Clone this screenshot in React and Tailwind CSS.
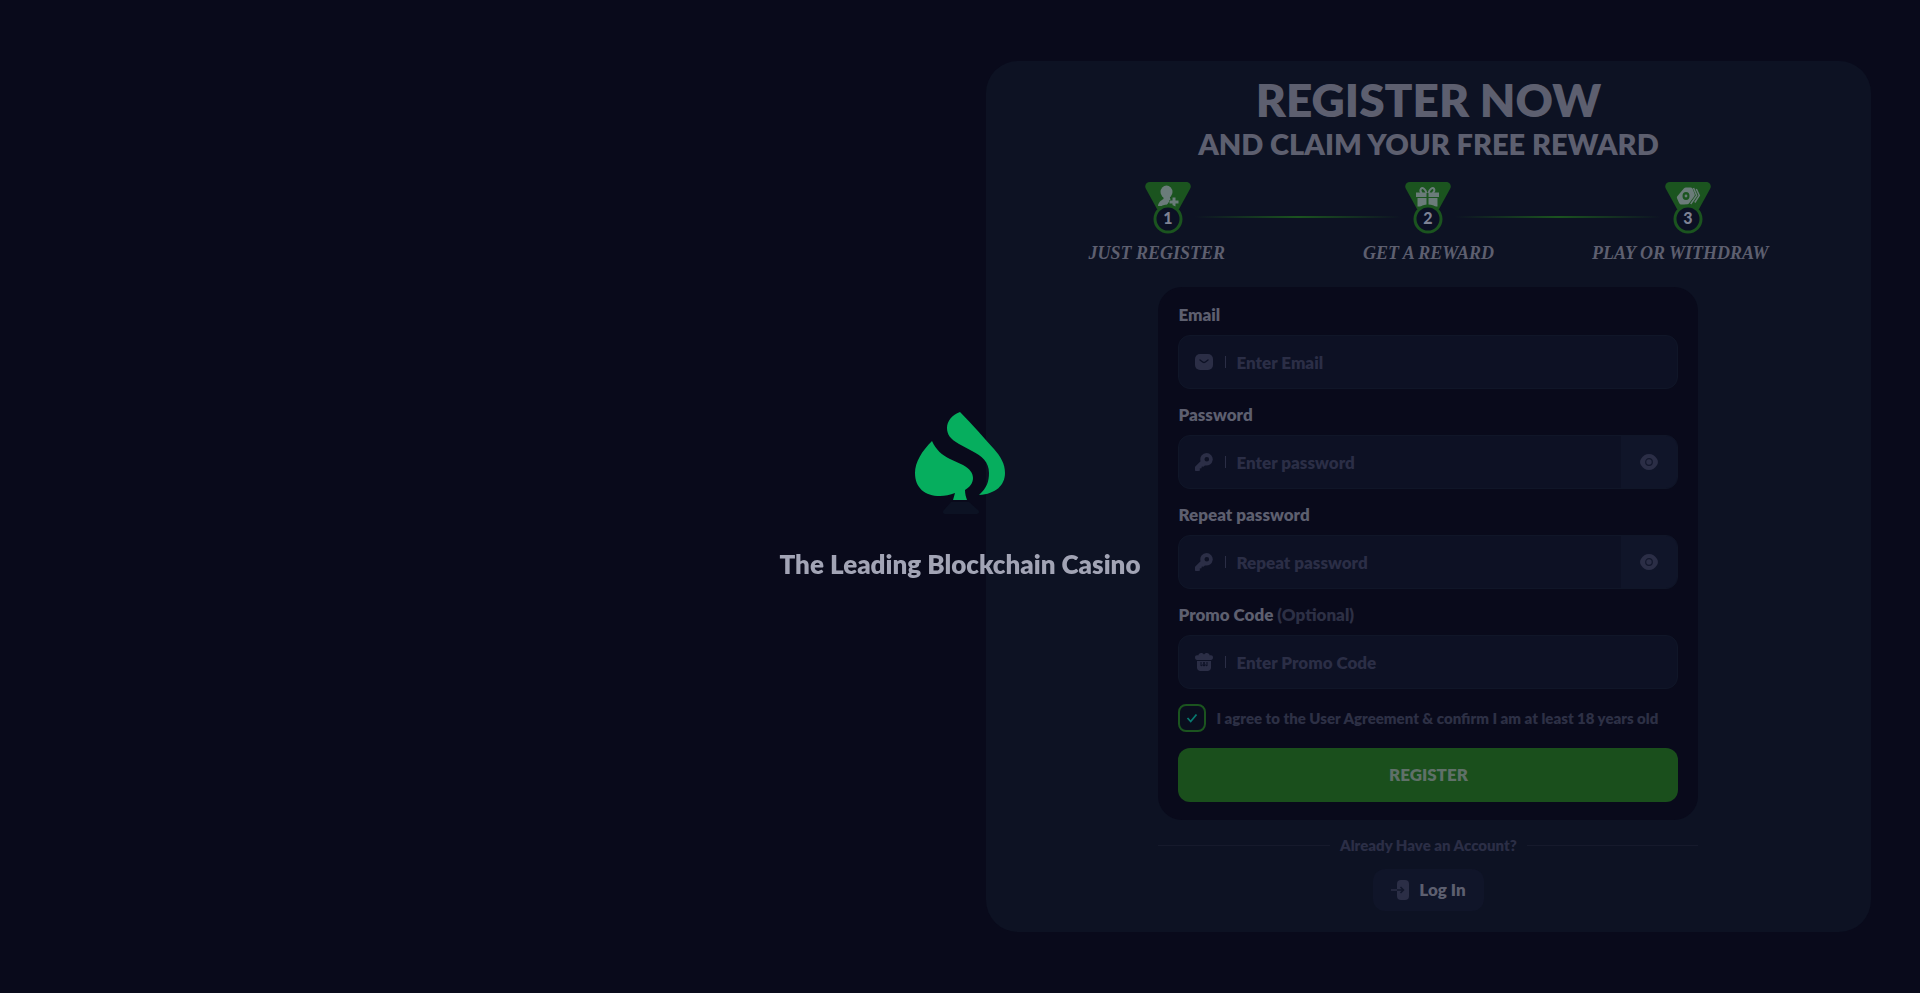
import { useState } from "react";

const steps = [
  { id: 1, label: "JUST REGISTER", icon: UserPlusIcon },
  { id: 2, label: "GET A REWARD", icon: GiftIcon },
  { id: 3, label: "PLAY OR WITHDRAW", icon: CashIcon },
];

function UserPlusIcon() {
  return (
    <g fill="#6b7c7a">
      <ellipse cx="21.500" cy="10" rx="6" ry="6.500" />
      <path d="M18.500 14h6l1 3.500-3 4.500-1.500 2H13c.500-4 3-5.500 5.500-7z" />
      <path d="M27.500 15.500h3v3h3v3h-3v3h-3v-3h-3v-3h3z" stroke="#1b541f" strokeWidth="1" paintOrder="stroke" />
    </g>
  );
}

function GiftIcon() {
  return (
    <g fill="#6b7c7a">
      <path d="M11 10.500h10.500V15H11zM23.500 10.500H34V15H23.500zM12.500 16h9v8.500h-9zM23.500 16h9v8.500h-9z" />
      <path d="M21.500 11c-1-4-4-6-5.500-4.300C15 8.200 15.500 10 17 11M23.500 11c1-4 4-6 5.500-4.300 1 1.500 0 3.300-1.500 4.300" fill="none" stroke="#6b7c7a" strokeWidth="2" />
    </g>
  );
}

function CashIcon() {
  return (
    <g>
      <path d="M21 5.500h4.500c1 0 1.800.500 2.200 1.500l2 5c.300.800.200 1.500-.300 2.200l-5.500 7.300c-.500.600-1.200 1-2 1h-5.600c-1 0-1.800-.600-2.200-1.500l-2-4.500c-.400-.800-.300-1.600.200-2.300l6.500-7.700c.600-.700 1.300-1 2.200-1z" fill="#6b7c7a" />
      <ellipse cx="21" cy="14" rx="3.500" ry="4" fill="#1b541f" />
      <circle cx="21" cy="14" r="1.400" fill="#6b7c7a" />
      <path d="M28.500 6l3.200 7.500-6 8.500M31.300 7l3 6.500-4.500 7" fill="none" stroke="#6b7c7a" strokeWidth="1.500" />
    </g>
  );
}

function StepBadge({ id, icon: Icon }) {
  return (
    <svg viewBox="0 0 46 52" className="w-[46px] h-[52px] shrink-0">
      <path d="M5 0h36c4 0 6 4 4 7L34 27H12L1 7C-1 4 1 0 5 0z" fill="#1b541f" />
      <Icon />
      <circle cx="23" cy="37" r="13" fill="#0b1024" stroke="#1b541f" strokeWidth="3" />
      <text x="23" y="42" textAnchor="middle" fontSize="16" fontWeight="900" fill="#7e8294" fontFamily="Lato, sans-serif">
        {id}
      </text>
    </svg>
  );
}

function MailIcon() {
  return (
    <svg viewBox="0 0 18 18" className="w-[18px] h-[18px]">
      <rect y="1" width="18" height="16" rx="5" fill="#2b2e46" />
      <path d="M5 7l3 2.200c.600.400 1.400.400 2 0L13 7" fill="none" stroke="#0d1125" strokeWidth="1.400" strokeLinecap="round" />
    </svg>
  );
}

function KeyIcon() {
  return (
    <svg viewBox="0 0 18 18" className="w-[18px] h-[18px]">
      <path fillRule="evenodd" d="M11.500 0a6.300 6.300 0 1 1-1.600 12.400L8.500 13.800 6.800 13.500 6.500 15.200 4.700 15.500 5 17.500 3.500 18H1c-.600 0-1-.400-1-1v-2.500c0-.500.200-1 .500-1.300L5.600 8.200A6.300 6.300 0 0 1 11.500 0zm.300 4a2.300 2.300 0 1 0 0 4.600 2.300 2.300 0 0 0 0-4.600z" fill="#2b2e46" />
    </svg>
  );
}

function PromoIcon() {
  return (
    <svg viewBox="0 0 18 18" className="w-[18px] h-[18px]">
      <path d="M2 8h14v6.500c0 2-1.500 3.500-3.500 3.500h-7C3.500 18 2 16.500 2 14.500z" fill="#2b2e46" />
      <path d="M2 2.300h1.500C3.500.300 6.500-1 9 1.400 11.500-1 14.500.300 14.500 2.300H16c1.200 0 2 .800 2 2.200s-.800 2.500-2 2.500H2C.800 7 0 6 0 4.500s.800-2.200 2-2.200z" fill="#2b2e46" />
      <path d="M6 9v4l1.500-1 1.500 1V9M9 9v4l1.500-1 1.500 1V9" fill="none" stroke="#0d1125" strokeWidth="1" />
    </svg>
  );
}

function EyeIcon() {
  return (
    <svg viewBox="0 0 18 16" className="w-[18px] h-4">
      <path d="M9 0c3.500 0 6 2 7.900 4.800 1.400 2 1.400 4.400 0 6.400C15 14 12.500 16 9 16s-6-2-7.900-4.800c-1.400-2-1.400-4.400 0-6.400C3 2 5.500 0 9 0z" fill="#2b2e46" />
      <circle cx="9" cy="8" r="3.300" fill="none" stroke="#12172b" strokeWidth="1.200" />
    </svg>
  );
}

function LoginIcon() {
  return (
    <svg viewBox="0 0 18 20" className="w-[18px] h-5">
      <rect x="6" width="12" height="20" rx="4" fill="#2b2e46" />
      <path d="M0 10h6" stroke="#2b2e46" strokeWidth="1.500" />
      <path d="M6 10h6M9.500 7l3 3-3 3" fill="none" stroke="#12172b" strokeWidth="1.500" />
    </svg>
  );
}

function Field({ id, label, optional, placeholder, icon, secret }) {
  const [visible, setVisible] = useState(false);

  return (
    <div className="mb-[14px]">
      <label htmlFor={id} className="block h-8 text-[17px] leading-6 font-extrabold text-[#5d5f6f]">
        {label} {optional && <span className="text-[#2d3045]">(Optional)</span>}
      </label>
      <div className="flex h-[54px] items-center overflow-hidden rounded-xl border border-[#101628] bg-[#0d1124] pl-4">
        {icon}
        <span className="ml-3 h-3 w-px bg-[#2b2e46]" />
        <input
          id={id}
          type={secret && !visible ? "password" : "text"}
          placeholder={placeholder}
          className="h-full min-w-0 flex-1 bg-transparent pl-[10px] text-[17px] font-extrabold text-[#5d5f6f] outline-none placeholder:text-[#2b2e46]"
        />
        {secret && (
          <button
            type="button"
            aria-label="Show password"
            onClick={() => setVisible(!visible)}
            className="flex h-full w-14 items-center justify-center bg-[#101529]"
          >
            <EyeIcon />
          </button>
        )}
      </div>
    </div>
  );
}

function Loader() {
  return (
    <div className="pointer-events-none fixed inset-0 flex flex-col items-center justify-center">
      <svg viewBox="0 0 92 104" className="h-[104px] w-[92px]">
        <path d="M46 0C59 13 70 26 80 37c7 8 11 15 11 24 0 12-9 21-26 22 8-7 10-14 10-22 0-11-7-17-17-22L45 32C36 27 33 22 33 16 33 9 38 3 46 0z" fill="#06ae5e" />
        <path d="M18 29c4 9 10 14 18 18l13 6c7 4 10 8 10 13s-3 9-8 12c0 4 1 7 2 10H39l2-7c-5 2-10 3-15 3C11 84 1 76 1 61 1 50 8 39 18 29z" fill="#06ae5e" />
        <path d="M37 90h18l9 8c2 2 1 4-2 4H32c-3 0-4-2-2-4z" fill="#0c1223" />
      </svg>
      <p className="mt-[30px] text-[26px] leading-9 font-extrabold text-[#a2a4b5]">The Leading Blockchain Casino</p>
    </div>
  );
}

export default function App() {
  const [agreed, setAgreed] = useState(true);

  return (
    <div className="flex min-h-screen items-center bg-[#090a1b] font-[Lato,'Liberation_Sans',sans-serif]">
      <main className="mr-[49px] ml-auto flex w-[46.1%] flex-col items-center rounded-[32px] bg-[#0d1223] pt-[15px] pb-[21px]">
        <h1 className="text-center font-extrabold text-[#5d5f6f]">
          <span className="block text-[46px] leading-12">REGISTER NOW</span>
          <span className="block text-[29px] leading-10">AND CLAIM YOUR FREE REWARD</span>
        </h1>

        <div className="mt-[18px] flex w-[566px] items-center">
          {steps.map((s, i) => (
            <div key={s.id} className={i ? "flex flex-1 items-center" : "flex items-center"}>
              {i > 0 && <div className="mx-1 mt-[18px] h-0.5 flex-1 bg-linear-to-r from-transparent via-[#1b541f] to-transparent" />}
              <StepBadge id={s.id} icon={s.icon} />
            </div>
          ))}
        </div>
        <div className="mt-[7px] grid w-[680px] grid-cols-3 font-['Liberation_Serif',serif] text-[18px] leading-6 font-bold text-[#5d5f6f] italic">
          <span>{steps[0].label}</span>
          <span className="text-center">{steps[1].label}</span>
          <span className="text-right">{steps[2].label}</span>
        </div>

        <form onSubmit={(e) => e.preventDefault()} className="mt-[22px] w-[540px] rounded-3xl bg-[#090a1b] px-5 pt-4 pb-[18px]">
          <Field id="email" label="Email" placeholder="Enter Email" icon={<MailIcon />} />
          <Field id="password" label="Password" placeholder="Enter password" icon={<KeyIcon />} secret />
          <Field id="repeat" label="Repeat password" placeholder="Repeat password" icon={<KeyIcon />} secret />
          <Field id="promo" label="Promo Code" optional placeholder="Enter Promo Code" icon={<PromoIcon />} />

          <label className="mt-[15px] flex items-center gap-[10px] text-[15px] leading-7 font-extrabold whitespace-nowrap text-[#2d3045]">
            <span className="grid shrink-0">
              <input
                type="checkbox"
                checked={agreed}
                onChange={(e) => setAgreed(e.target.checked)}
                className="col-start-1 row-start-1 size-7 appearance-none rounded-lg border-2 border-[#1b541f] bg-[#0a0e1e]"
              />
              {agreed && (
                <svg viewBox="0 0 28 28" className="pointer-events-none col-start-1 row-start-1 size-7">
                  <path d="M9.500 14l3.200 3.500 5.800-7" fill="none" stroke="#08796f" strokeWidth="1.800" />
                </svg>
              )}
            </span>
            I agree to the User Agreement &amp; confirm I am at least 18 years old
          </label>
          <button type="submit" className="mt-4 h-[54px] w-full rounded-xl bg-[#1a4f1c] text-[17px] font-extrabold text-[#5f7068]">
            REGISTER
          </button>
        </form>

        <div className="mt-[13px] flex w-[540px] items-center gap-[10px] text-[15px] leading-6 font-extrabold text-[#2b2e46]">
          <span className="h-px flex-1 bg-[#161a2c]" />
          Already Have an Account?
          <span className="h-px flex-1 bg-[#161a2c]" />
        </div>
        <button type="button" className="mt-3 flex h-[42px] items-center gap-[10px] rounded-xl bg-[#101529] px-[18px] text-[17px] font-extrabold text-[#5d5f6f]">
          <LoginIcon />
          Log In
        </button>
      </main>
      <Loader />
    </div>
  );
}
